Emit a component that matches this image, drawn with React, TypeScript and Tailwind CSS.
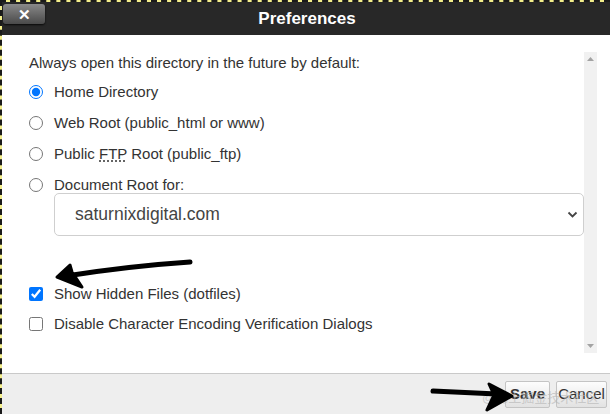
import React from "react";

export default function App() {
  const font = { fontFamily: '"Liberation Sans", Arial, sans-serif' };
  return (
    <div
      className="relative w-[610px] h-[414px] overflow-hidden bg-[#f3ee8a] border-t-2 border-l-2 border-dashed border-[#1a1a1a]"
      style={font}
    >
      <div className="flex flex-col w-full h-full bg-white">
        {/* Header */}
        <div className="relative h-[33px] bg-[#282828] flex items-center justify-center shrink-0">
          <div className="absolute left-[1px] top-[2px] w-[42px] h-[20px] rounded-[3px] bg-gradient-to-b from-[#8a8a8a] to-[#4a4a4a] shadow-[0_1px_2px_rgba(0,0,0,0.8)] flex items-center justify-center">
            <span className="text-white font-bold text-[15px] leading-none">✕</span>
          </div>
          <span className="text-white font-bold text-[17px] leading-none ml-[2px]">Preferences</span>
        </div>

        {/* Body */}
        <div className="flex flex-row h-[338px] shrink-0">
          <div className="flex-1 flex flex-col pl-[27px] pt-[19px] text-[#333]">
            <div className="text-[15px] leading-[18px] text-[#333]">
              Always open this directory in the future by default:
            </div>
            <div className="flex flex-col gap-[11px] mt-[10px]">
              <label className="flex items-center h-[20px] gap-[11px] text-[15px]">
                <input type="radio" name="dir" defaultChecked className="w-[14px] h-[14px] m-0 accent-[#0075ff]" />
                <span>Home Directory</span>
              </label>
              <label className="flex items-center h-[20px] gap-[11px] text-[15px]">
                <input type="radio" name="dir" className="w-[14px] h-[14px] m-0" />
                <span>Web Root (public_html or www)</span>
              </label>
              <label className="flex items-center h-[20px] gap-[11px] text-[15px]">
                <input type="radio" name="dir" className="w-[14px] h-[14px] m-0" />
                <span>
                  Public <abbr className="underline decoration-dotted underline-offset-2">FTP</abbr> Root (public_ftp)
                </span>
              </label>
              <label className="flex items-center h-[20px] gap-[11px] text-[15px]">
                <input type="radio" name="dir" className="w-[14px] h-[14px] m-0" />
                <span>Document Root for:</span>
              </label>
            </div>
            <div className="ml-[25px] mt-[-2px] h-[43px] border border-[#cfcfcf] rounded-[5px] flex items-center justify-between pl-[20px] pr-[5px]">
              <span className="text-[17.5px] text-[#444]">saturnixdigital.com</span>
              <svg width="11" height="7" viewBox="0 0 11 7">
                <path d="M1.5 1.5 L5.5 5.5 L9.5 1.5" fill="none" stroke="#444" strokeWidth="1.8" />
              </svg>
            </div>
            <div className="flex flex-col gap-[10px] mt-[48px]">
              <label className="flex items-center h-[20px] gap-[11px] text-[15px]">
                <input type="checkbox" defaultChecked className="w-[14px] h-[14px] m-0 accent-[#0075ff]" />
                <span>Show Hidden Files (dotfiles)</span>
              </label>
              <label className="flex items-center h-[20px] gap-[11px] text-[15px]">
                <input type="checkbox" className="w-[14px] h-[14px] m-0" />
                <span>Disable Character Encoding Verification Dialogs</span>
              </label>
            </div>
          </div>
          {/* Scrollbar */}
          <div className="w-[13px] h-[301px] mt-[17px] mr-[13px] bg-[#f1f1f1] flex flex-col items-center justify-between py-[5px]">
            <svg width="7" height="4" viewBox="0 0 7 4">
              <path d="M3.5 0 L7 4 L0 4 Z" fill="#a3a3a3" />
            </svg>
            <svg width="7" height="4" viewBox="0 0 7 4">
              <path d="M0 0 L7 0 L3.5 4 Z" fill="#a3a3a3" />
            </svg>
          </div>
        </div>

        {/* Footer */}
        <div className="relative flex-1 bg-[#eeeeee] border-t border-[#c9c9c9] flex justify-end items-start pt-[7px] pr-[3px] gap-[6px]">
          <div className="w-[45px] h-[27px] border border-[#c4c4c4] rounded-[2px] bg-gradient-to-b from-[#fdfdfd] to-[#e2e2e2] flex items-center justify-center text-[15px] font-bold text-[#333]">
            Save
          </div>
          <div className="w-[51px] h-[27px] border border-[#c4c4c4] rounded-[2px] bg-gradient-to-b from-[#fdfdfd] to-[#e2e2e2] flex items-center justify-center text-[15px] text-[#333]">
            Cancel
          </div>
          <span
            className="absolute left-[480px] top-[14px] text-[13px] text-[#b5b5b5] opacity-60 pointer-events-none"
            style={{ fontFamily: '"Liberation Sans", "Noto Sans CJK SC", sans-serif' }}
          >
            @稀土掘金技术社区
          </span>
        </div>
      </div>

      {/* Annotation arrows */}
      <svg className="absolute left-[-2px] top-[-2px] pointer-events-none" width="610" height="414" viewBox="0 0 610 414">
        <path d="M190 262 Q130 266 66 276" fill="none" stroke="#000" strokeWidth="5" strokeLinecap="round" />
        <path d="M57 277 L70 265 L72 272 L82 287 Z" fill="#000" stroke="#000" strokeWidth="3" strokeLinejoin="round" />
        <path d="M433 391 L497 394" fill="none" stroke="#000" strokeWidth="5" strokeLinecap="round" />
        <path d="M512 396 L489 384 L494 395 L487 410 Z" fill="#000" stroke="#000" strokeWidth="3" strokeLinejoin="round" />
      </svg>
    </div>
  );
}
